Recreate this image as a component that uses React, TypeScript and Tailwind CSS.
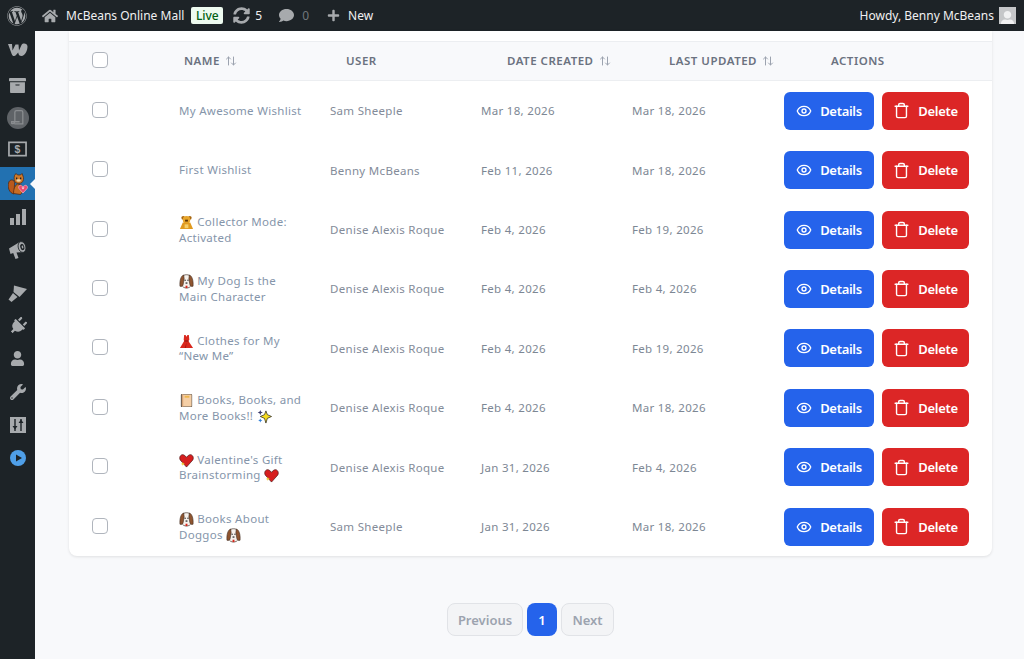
import React from 'react';
import { ArrowUpDown, Eye, Trash } from 'lucide-react';
import { FaWordpress, FaHome, FaComment, FaPlus, FaSyncAlt, FaPlug, FaUser, FaWrench, FaArchive } from 'react-icons/fa';

type Em = 'bear' | 'dog' | 'dress' | 'book' | 'sparkle' | 'heart';

function Emoji({ name }: { name: Em }) {
  return (
    <svg viewBox="0 0 16 16" className="inline-block w-[15px] h-[15px] -my-[2px] align-[-2px]">
      {name === 'bear' && (
        <>
          <circle cx="4.5" cy="3" r="2" fill="#a8660f" />
          <circle cx="11.5" cy="3" r="2" fill="#a8660f" />
          <circle cx="8" cy="5" r="4" fill="#e8a62c" />
          <path d="M4 8h8l3 7H1z" fill="#e09a1f" />
          <rect x="6.500" y="5" width="3" height="2" fill="#5a3206" />
          <rect x="6" y="10" width="4" height="4" fill="#f6cf6b" />
        </>
      )}
      {name === 'dog' && (
        <>
          <path d="M4 3c0-3 8-3 8 0l1 8c0 3-3 4-5 4s-5-1-5-4z" fill="#f7f2ec" stroke="#3d2a20" strokeWidth="0.7" />
          <path d="M5 1C2 2 .5 7 1 13c2 .6 3 0 3.500-2L5.500 5z" fill="#8f5530" stroke="#3d2a20" strokeWidth="0.6" />
          <path d="M11 1c3 1 4.500 6 4 12-2 .6-3 0-3.500-2L10.500 5z" fill="#8f5530" stroke="#3d2a20" strokeWidth="0.6" />
          <rect x="6" y="6" width="1.100" height="1.400" fill="#222" />
          <rect x="9" y="6" width="1.100" height="1.400" fill="#222" />
          <rect x="7" y="9" width="2" height="1.300" fill="#222" />
          <rect x="7" y="12.500" width="2" height="2.500" fill="#d8261c" />
        </>
      )}
      {name === 'dress' && (
        <>
          <path d="M5.500 1h1.500l1 2 1-2h1.500l.5 5-1 1.500L15 15H1L5.500 7.500 5 6z" fill="#d9281e" />
          <path d="M6 7h4l.5 1h-5z" fill="#8e130e" />
          <path d="M8 9l-2 6h1.500z" fill="#a51a12" />
        </>
      )}
      {name === 'book' && (
        <>
          <rect x="2" y="1" width="12" height="14" rx="1" fill="#3d3a38" />
          <rect x="3" y="1.500" width="10.500" height="13" fill="#f5cfa6" />
          <rect x="3" y="1.500" width="1.500" height="13" fill="#d8a577" />
          <rect x="6" y="3" width="5" height="2" fill="#eeb64c" />
        </>
      )}
      {name === 'sparkle' && (
        <>
          <path d="M9.500 2l1.500 4L15.500 8 11 10l-1.500 5L8 10 3.500 8 8 6z" fill="#f6dc1f" stroke="#2c2a20" strokeWidth="0.8" />
          <path d="M3.500 1l.8 2 2 .8-2 .8-.8 2-.8-2-2-.8 2-.8z" fill="#3a3a6a" />
          <path d="M3.500 10l.7 1.500 1.500.7-1.500.7-.7 1.500-.7-1.500-1.500-.7 1.500-.7z" fill="#2e7fd8" />
        </>
      )}
      {name === 'heart' && (
        <>
          <path d="M8 15L1.300 7.500C-.5 4 2.500.8 5 2c1.300.6 2.300 1.500 3 2.700C8.700 3.500 9.700 2.600 11 2c2.500-1.200 5.500 2 3.700 5.500z" fill="#d61f1f" stroke="#4a1010" strokeWidth="0.7" />
          <path d="M4 9.500l.8 1.500 1.500.6-1.500.6L4 13.500l-.5-1.300L2 11.600l1.500-.6z" fill="#f4c92c" />
        </>
      )}
    </svg>
  );
}

const rows: { name: React.ReactNode; user: string; created: string; updated: string }[] = [
  { name: 'My Awesome Wishlist', user: 'Sam Sheeple', created: 'Mar 18, 2026', updated: 'Mar 18, 2026' },
  { name: 'First Wishlist', user: 'Benny McBeans', created: 'Feb 11, 2026', updated: 'Mar 18, 2026' },
  { name: <><Emoji name="bear" /> Collector Mode:<br />Activated</>, user: 'Denise Alexis Roque', created: 'Feb 4, 2026', updated: 'Feb 19, 2026' },
  { name: <><Emoji name="dog" /> My Dog Is the<br />Main Character</>, user: 'Denise Alexis Roque', created: 'Feb 4, 2026', updated: 'Feb 4, 2026' },
  { name: <><Emoji name="dress" /> Clothes for My<br />“New Me”</>, user: 'Denise Alexis Roque', created: 'Feb 4, 2026', updated: 'Feb 19, 2026' },
  { name: <><Emoji name="book" /> Books, Books, and<br />More Books!! <Emoji name="sparkle" /></>, user: 'Denise Alexis Roque', created: 'Feb 4, 2026', updated: 'Mar 18, 2026' },
  { name: <><Emoji name="heart" /> Valentine's Gift<br />Brainstorming <Emoji name="heart" /></>, user: 'Denise Alexis Roque', created: 'Jan 31, 2026', updated: 'Feb 4, 2026' },
  { name: <><Emoji name="dog" /> Books About<br />Doggos <Emoji name="dog" /></>, user: 'Sam Sheeple', created: 'Jan 31, 2026', updated: 'Mar 18, 2026' },
];

function Squirrel() {
  return (
    <svg viewBox="0 0 20 22" className="w-[20px] h-[22px]">
      <path d="M6 21C1 20-.5 14 .5 10 1.500 6 6 6 6.500 9.500 7 12 5.500 14 7 18z" fill="#b9591c" stroke="#4f240c" strokeWidth="0.7" />
      <path d="M5.500 20.500c0-4 1-8 4-9.500l4 1 1 7-2 2.500z" fill="#c96d24" stroke="#4f240c" strokeWidth="0.7" />
      <path d="M6.500 2.500L8 .5l1.500 1.500h3L14 .5l1 2.500c1 2 .5 5-1 6.500-2 1.200-4.500 1.200-6.500 0C6 8 5.800 5 6.500 2.500z" fill="#cf7a2a" stroke="#4f240c" strokeWidth="0.7" />
      <rect x="8" y="4.500" width="1.300" height="1.700" fill="#222" />
      <rect x="12" y="4.500" width="1.300" height="1.700" fill="#222" />
      <ellipse cx="10.600" cy="7.500" rx="2.200" ry="1.300" fill="#f0d6a5" />
      <path d="M15 20l-4-4.500c-1.200-2 1-4 2.500-2.800l1.500 1 1.500-1c1.600-1.200 3.800.8 2.600 2.800z" fill="#e8476f" stroke="#f2a9bb" strokeWidth="0.8" />
      <path d="M15 16.500l-1.300-1.400c-.3-.7.5-1.100 1.300-.4.800-.7 1.600-.3 1.300.4z" fill="#f8d3dc" />
    </svg>
  );
}

function SideItem({ className, children }: { className?: string; children: React.ReactNode }) {
  return <div className={'flex items-center justify-center w-full text-[#a7aaad] ' + (className ?? 'h-[33px]')}>{children}</div>;
}

function Sidebar() {
  return (
    <aside className="w-[35px] shrink-0 bg-[#1d2327] flex flex-col pt-[2px]">
      <SideItem>
        <svg viewBox="0 0 20 14" className="w-[20px] h-[14px]" fill="#a7aaad">
          <path d="M0 1h4l.5 6.500L7.500 1.500h3L11 7.500 13.500 2C15 -.5 19.500 .5 19.500 3.500c0 4-2.500 9.500-6 9.500-2 0-3-1-3.300-3.500L8 12c-1.300 1.700-3.800 1.200-4.300-1z" />
        </svg>
      </SideItem>
      <SideItem className="h-[33px] mt-[3px]"><FaArchive size={17} /></SideItem>
      <SideItem className="h-[31px]">
        <div className="w-[22px] h-[22px] rounded-full bg-[#5f6367] flex items-center justify-center">
          <svg viewBox="0 0 16 16" className="w-[17px] h-[17px]" fill="none" stroke="#8a8d90" strokeWidth="1.200">
            <path d="M5 14h8V3a1.500 1.500 0 0 0-1.500-1.500H7A1.500 1.500 0 0 0 5.500 3v9a2 2 0 0 1-3 1.500V12H10" />
          </svg>
        </div>
      </SideItem>
      <SideItem className="h-[31px]">
        <svg viewBox="0 0 20 16" className="w-[19px] h-[16px]">
          <rect x="1" y="1" width="18" height="14" fill="none" stroke="#a7aaad" strokeWidth="1.800" />
          <text x="10" y="12.500" textAnchor="middle" fontSize="11" fontWeight="700" fill="#a7aaad" fontFamily="'Liberation Sans', sans-serif">$</text>
        </svg>
      </SideItem>
      <div className="relative mt-[3px] h-[33px] bg-[#2271b1] flex items-center justify-center">
        <Squirrel />
        <div className="absolute right-0 top-[12px] w-0 h-0 border-y-[5px] border-y-transparent border-r-[5px] border-r-[#f8f9fb]" />
      </div>
      <SideItem>
        <svg viewBox="0 0 16 16" className="w-[16px] h-[16px]" fill="#a7aaad">
          <rect x="0" y="9" width="4" height="7" /><rect x="6" y="5" width="4" height="11" /><rect x="12" y="0" width="4" height="16" />
        </svg>
      </SideItem>
      <SideItem>
        <svg viewBox="0 0 18 18" className="w-[18px] h-[18px]">
          <path d="M0 7.500L11.500 .5l3 10.500-7 .5 2 5.500-3 1-2.300-6L1.500 13z" fill="#a7aaad" />
          <ellipse cx="13" cy="6" rx="3.800" ry="5.500" transform="rotate(-15 13 6)" fill="#a7aaad" stroke="#1d2327" strokeWidth="0.8" />
          <ellipse cx="13.300" cy="6" rx="2" ry="3.200" transform="rotate(-15 13.300 6)" fill="#1d2327" />
          <ellipse cx="13.500" cy="6" rx="0.800" ry="1.500" transform="rotate(-15 13.500 6)" fill="#a7aaad" />
        </svg>
      </SideItem>
      <SideItem className="h-[33px] mt-[10px]">
        <svg viewBox="0 0 19 19" className="w-[19px] h-[19px]" fill="#a7aaad">
          <path d="M6 2.500L19 6l-7.500 8L5.500 9z" />
          <path d="M5 10l4.500 4-6 5L.5 16.500z" />
        </svg>
      </SideItem>
      <SideItem><FaPlug size={18} className="rotate-45" /></SideItem>
      <SideItem><FaUser size={15} /></SideItem>
      <SideItem><FaWrench size={16} /></SideItem>
      <SideItem>
        <svg viewBox="0 0 16 16" className="w-[16px] h-[16px]">
          <rect width="16" height="16" fill="#a7aaad" />
          <path d="M5 2v12M11 2v12" stroke="#1d2327" strokeWidth="1.400" />
          <path d="M2.500 9h5L5 12.500zM8.500 6h5L11 2.500z" fill="#1d2327" />
        </svg>
      </SideItem>
      <SideItem>
        <svg viewBox="0 0 16 16" className="w-[16px] h-[16px]">
          <circle cx="8" cy="8" r="8" fill="#4f9fe8" />
          <path d="M6 4.500L12 8l-6 3.500z" fill="#1d2327" />
        </svg>
      </SideItem>
    </aside>
  );
}

function TopBar() {
  return (
    <header className="h-[31px] shrink-0 bg-[#1d2327] flex items-center text-[12px] text-[#f0f0f1] pl-[7px] pr-[8px]">
      <FaWordpress size={20} className="text-[#a7aaad]" />
      <FaHome size={16} className="ml-[15px] text-[#a7aaad]" />
      <span className="ml-[8px]">McBeans Online Mall</span>
      <span className="ml-[7px] h-[17px] w-[32px] flex items-center justify-center rounded-[2px] bg-[#edfaef] text-[#00600f] text-[12px] font-medium">Live</span>
      <FaSyncAlt size={17} className="ml-[10px] text-[#a7aaad]" />
      <span className="ml-[5px]">5</span>
      <FaComment size={15} className="ml-[17px] text-[#a7aaad]" />
      <span className="ml-[8px] text-[#72777c]">0</span>
      <FaPlus size={13} className="ml-[18px] text-[#a7aaad]" />
      <span className="ml-[8px]">New</span>
      <span className="ml-auto">Howdy, Benny McBeans</span>
      <span className="ml-[5px] w-[17px] h-[17px] bg-[#c5c7c9] overflow-hidden flex items-end justify-center">
        <FaUser size={15} className="text-[#f0f1f2] translate-y-[2px]" />
      </span>
    </header>
  );
}

function Check() {
  return <span className="block w-[16px] h-[16px] mb-[2px] rounded-[4px] border border-[#b0b5bd] bg-white" />;
}

function HeadCell({ label, sort }: { label: string; sort?: boolean }) {
  return (
    <div className="flex items-center gap-[5px] text-[11.5px] font-semibold tracking-[0.5px] text-[#6b7280] whitespace-nowrap">
      {label}
      {sort && <ArrowUpDown size={12} className="text-[#9ca3af]" />}
    </div>
  );
}

function Row({ row }: { row: (typeof rows)[number] }) {
  return (
    <div className="grid grid-cols-[87px_151px_151px_151px_152px_auto] items-center h-[59.43px] pl-[23px] text-[11.5px] tracking-[0.3px] text-[#7d8794]">
      <Check />
      <div className="leading-[15.500px] text-[#8595aa] whitespace-nowrap">{row.name}</div>
      <div className="text-[#838b99]">{row.user}</div>
      <div>{row.created}</div>
      <div>{row.updated}</div>
      <div className="flex gap-[8px] text-[13px] font-semibold tracking-[-0.3px] text-white">
        <button className="h-[38px] w-[90px] flex items-center justify-center gap-[8px] rounded-[6px] bg-[#2563eb]">
          <Eye size={16} /><span className="pt-[2px]">Details</span>
        </button>
        <button className="h-[38px] w-[87px] flex items-center justify-center gap-[8px] rounded-[6px] bg-[#dc2626]">
          <Trash size={17} /><span className="pt-[2px]">Delete</span>
        </button>
      </div>
    </div>
  );
}

export default function App() {
  return (
    <div className="w-[1024px] h-[659px] overflow-hidden flex flex-col bg-[#f8f9fb] font-['Noto_Sans','Open_Sans',sans-serif]">
      <TopBar />
      <div className="flex flex-1 min-h-0">
        <Sidebar />
        <main className="flex-1 pl-[34px] pr-[32px]">
          <div className="bg-white rounded-b-[8px] shadow-[0_1px_3px_rgba(0,0,0,0.1)] pt-[10px]">
            <div className="grid grid-cols-[92px_162px_161px_162px_auto] items-center h-[40px] pl-[23px] bg-[#f8f9fb] border-y border-[#eceef1]">
              <Check />
              <HeadCell label="NAME" sort />
              <HeadCell label="USER" />
              <HeadCell label="DATE CREATED" sort />
              <div className="grid grid-cols-[162px_auto]">
                <HeadCell label="LAST UPDATED" sort />
                <HeadCell label="ACTIONS" />
              </div>
            </div>
            {rows.map((row, i) => <Row key={i} row={row} />)}
          </div>
          <nav className="mt-[47px] flex justify-center gap-[4px] text-[13px] font-semibold">
            <button className="h-[33px] w-[76px] pt-[1px] rounded-[8px] border border-[#e1e3e7] bg-[#f3f4f6] text-[#9ca3af]">Previous</button>
            <button className="h-[33px] w-[30px] pt-[1px] rounded-[8px] bg-[#2563eb] text-white">1</button>
            <button className="h-[33px] w-[53px] pt-[1px] rounded-[8px] border border-[#e1e3e7] bg-[#f3f4f6] text-[#9ca3af]">Next</button>
          </nav>
        </main>
      </div>
    </div>
  );
}
